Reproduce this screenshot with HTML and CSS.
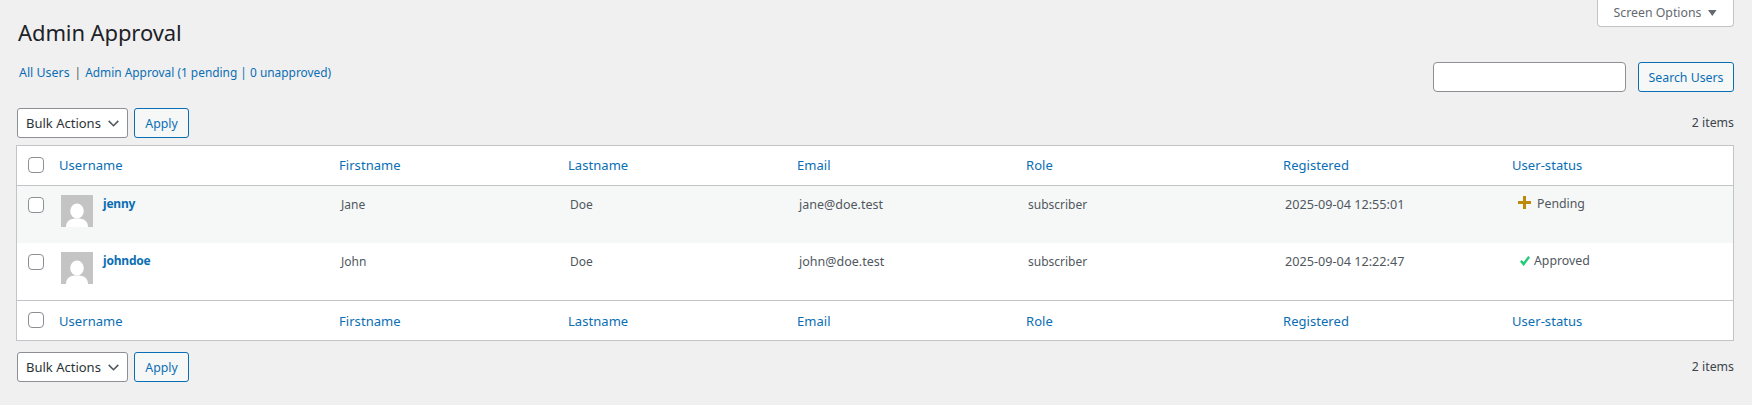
FILE: index.html
```html
<!DOCTYPE html>
<html lang="en">
<head>
<meta charset="utf-8">
<title>Admin Approval</title>
<link rel="stylesheet" href="styles.css">
</head>
<body>
<div class="wrap">
  <header class="top">
    <div class="top-left">
      <h1>Admin Approval</h1>
      <nav class="subnav"><a href="#" class="all">All Users</a><span class="sep">|</span><a href="#">Admin Approval (1 pending | 0 unapproved)</a></nav>
    </div>
    <div class="top-right">
      <button class="screen-options" type="button">Screen Options<svg class="caret" width="9" height="6" viewBox="0 0 9 6"><path d="M0 0h8.600L4.300 6z"/></svg></button>
      <form class="search"><input class="search-input" type="search" aria-label="Search"><button class="btn btn-search" type="button">Search Users</button></form>
    </div>
  </header>

  <div class="toolbar toolbar-top">
    <div class="bulk">
      <div class="select">Bulk Actions<svg width="11" height="7" viewBox="0 0 11 7"><path d="M.7.900l4.800 4.800L10.300.9" fill="none" stroke="#50575e" stroke-width="1.6"/></svg></div>
      <button class="btn btn-apply" type="button">Apply</button>
    </div>
    <span class="count">2 items</span>
  </div>

  <table class="users">
    <colgroup><col class="c-check"><col class="c-user"><col class="c-mid"><col class="c-mid"><col class="c-mid"><col class="c-role"><col class="c-mid"><col></colgroup>
    <thead>
      <tr><th class="check"><input type="checkbox"></th><th><a href="#">Username</a></th><th><a href="#">Firstname</a></th><th><a href="#">Lastname</a></th><th><a href="#">Email</a></th><th><a href="#">Role</a></th><th><a href="#">Registered</a></th><th><a href="#">User-status</a></th></tr>
    </thead>
    <tbody>
      <tr class="alt">
        <td class="check"><input type="checkbox"></td>
        <td class="user"><svg class="avatar" width="32" height="32" viewBox="0 0 32 32"><rect width="32" height="32" fill="#c4c4c4"/><ellipse cx="16" cy="16" rx="6.800" ry="7.600" fill="#fff"/><path d="M5 32c0-6 4-8.500 11-8.500S27 26 27 32z" fill="#fff"/></svg><a href="#">jenny</a></td>
        <td>Jane</td><td>Doe</td><td class="email">jane@doe.test</td><td>subscriber</td><td class="date">2025-09-04 12:55:01</td>
        <td class="status pending"><svg width="13" height="13" viewBox="0 0 13 13"><path d="M5 0h3v5h5v3H8v5H5V8H0V5h5z" fill="#bf8a0c"/></svg>Pending</td>
      </tr>
      <tr>
        <td class="check"><input type="checkbox"></td>
        <td class="user"><svg class="avatar" width="32" height="32" viewBox="0 0 32 32"><rect width="32" height="32" fill="#c4c4c4"/><ellipse cx="16" cy="16" rx="6.800" ry="7.600" fill="#fff"/><path d="M5 32c0-6 4-8.500 11-8.500S27 26 27 32z" fill="#fff"/></svg><a href="#">johndoe</a></td>
        <td>John</td><td>Doe</td><td class="email">john@doe.test</td><td>subscriber</td><td class="date">2025-09-04 12:22:47</td>
        <td class="status approved"><svg width="10" height="10" viewBox="0 0 10 10"><path d="M0 5.800l1.700-1.700 1.900 2L8.200 0 10 1.600 3.700 10z" fill="#1fcb78"/></svg>Approved</td>
      </tr>
    </tbody>
    <tfoot>
      <tr><th class="check"><input type="checkbox"></th><th><a href="#">Username</a></th><th><a href="#">Firstname</a></th><th><a href="#">Lastname</a></th><th><a href="#">Email</a></th><th><a href="#">Role</a></th><th><a href="#">Registered</a></th><th><a href="#">User-status</a></th></tr>
    </tfoot>
  </table>

  <div class="toolbar toolbar-bottom">
    <div class="bulk">
      <div class="select">Bulk Actions<svg width="11" height="7" viewBox="0 0 11 7"><path d="M.7.900l4.800 4.800L10.300.9" fill="none" stroke="#50575e" stroke-width="1.6"/></svg></div>
      <button class="btn btn-apply" type="button">Apply</button>
    </div>
    <span class="count">2 items</span>
  </div>
</div>
</body>
</html>
```

FILE: styles.css
```css
* { box-sizing: border-box; }
html, body { margin: 0; height: 100%; }
body {
  background: #f0f0f1;
  color: #3c434a;
  font: 13px/1.4 "Noto Sans", sans-serif;
  overflow: hidden;
}
a { color: #0a6eb4; text-decoration: none; }
.wrap { padding: 0 18px 0 17px; }
.top { display: flex; justify-content: space-between; align-items: flex-start; }
h1 {
  margin: 0 0 0 1px;
  padding-top: 18px;
  font-size: 22px;
  font-weight: 400;
  line-height: 29px;
  letter-spacing: -0.1px;
  color: #1d2327;
}
.subnav { margin-top: 16px; margin-left: 2px; line-height: 18px; color: #50575e; font-size: 11.9px; }
.all { font-size: 12.4px; }
.sep { margin: 0 4px 0 5px; }
.top-right { display: flex; flex-direction: column; align-items: flex-end; }
.screen-options {
  width: 137px;
  height: 28px;
  margin-top: -1px;
  padding: 0;
  background: #fff;
  border: 1px solid #c3c4c7;
  border-top: 0;
  border-radius: 0 0 4px 4px;
  color: #646970;
  font: 12.3px "Noto Sans", sans-serif;
  display: flex;
  align-items: center;
  justify-content: center;
  gap: 7px;
}
.caret { fill: #646970; }
.search { display: flex; gap: 12px; margin-top: 35px; }
.search-input {
  width: 193px;
  height: 30px;
  background: #fff;
  border: 1px solid #8c8f94;
  border-radius: 4px;
  appearance: none;
  outline: 0;
}
.btn {
  height: 30px;
  padding: 0;
  background: #f6f7f7;
  border: 1px solid #0a6eb4;
  border-radius: 3px;
  color: #0a6eb4;
  font: 12.3px "Noto Sans", sans-serif;
}
.btn-search { width: 96px; }
.btn-apply { width: 55px; }
.toolbar { display: flex; justify-content: space-between; align-items: center; }
.toolbar-top { margin-top: 16px; height: 30px; }
.toolbar-bottom { margin-top: 11px; height: 30px; }
.bulk { display: flex; gap: 6px; }
.select {
  width: 111px;
  height: 30px;
  padding: 0 8px;
  background: #fff;
  border: 1px solid #8c8f94;
  border-radius: 3px;
  color: #2c3338;
  font-size: 13px;
  display: flex;
  align-items: center;
  justify-content: space-between;
}
.count { font-size: 12.3px; color: #3c434a; }
.users {
  width: 1718px;
  margin: 7px 0 0 -1px;
  background: #fff;
  border: 1px solid #c3c4c7;
  border-collapse: separate;
  border-spacing: 0;
  table-layout: fixed;
}
.c-check { width: 34px; }
.c-user { width: 280px; }
.c-mid { width: 229px; }
.c-role { width: 257px; }
input[type="checkbox"] {
  appearance: none;
  display: block;
  width: 16px;
  height: 16px;
  margin: 0;
  background: #fff;
  border: 1px solid #8c8f94;
  border-radius: 4px;
}
th {
  height: 40px;
  padding: 0 8px;
  font-weight: 400;
  font-size: 13px;
  letter-spacing: 0.05px;
  text-align: left;
}
th.check input { margin-top: -2px; }
thead th { border-bottom: 1px solid #c3c4c7; }
tfoot th { border-top: 1px solid #c3c4c7; height: 40px; padding-top: 2px; }
tfoot th.check { padding-top: 0; }
tfoot th.check input { margin-top: -1px; }
th.check, td.check { padding: 0 0 0 11px; }
td {
  height: 57px;
  padding: 9px 10px 0;
  vertical-align: top;
  color: #50575e;
  font-size: 12px;
  line-height: 20px;
}
td.check { padding-top: 11px; }
.alt td { background: #f6f7f7; }
.email { font-size: 12.5px; }
td.date { font-size: 12.65px; padding-top: 8px; }
.user { padding-top: 8px; }
.user a { font-weight: 700; font-size: 12px; letter-spacing: -0.2px; line-height: 20px; display: block; }
.avatar { float: left; margin: 1px 10px 0 0; display: block; }
td.status { display: flex; align-items: flex-start; height: 57px; padding-top: 8px; font-size: 12.3px; }
.status svg { flex: none; }
.pending { gap: 6px; }
td.pending { padding-left: 14px; }
.pending svg { margin-top: 2px; }
.approved { gap: 4px; }
td.approved { padding-left: 16px; }
.approved svg { margin-top: 5px; }
```
